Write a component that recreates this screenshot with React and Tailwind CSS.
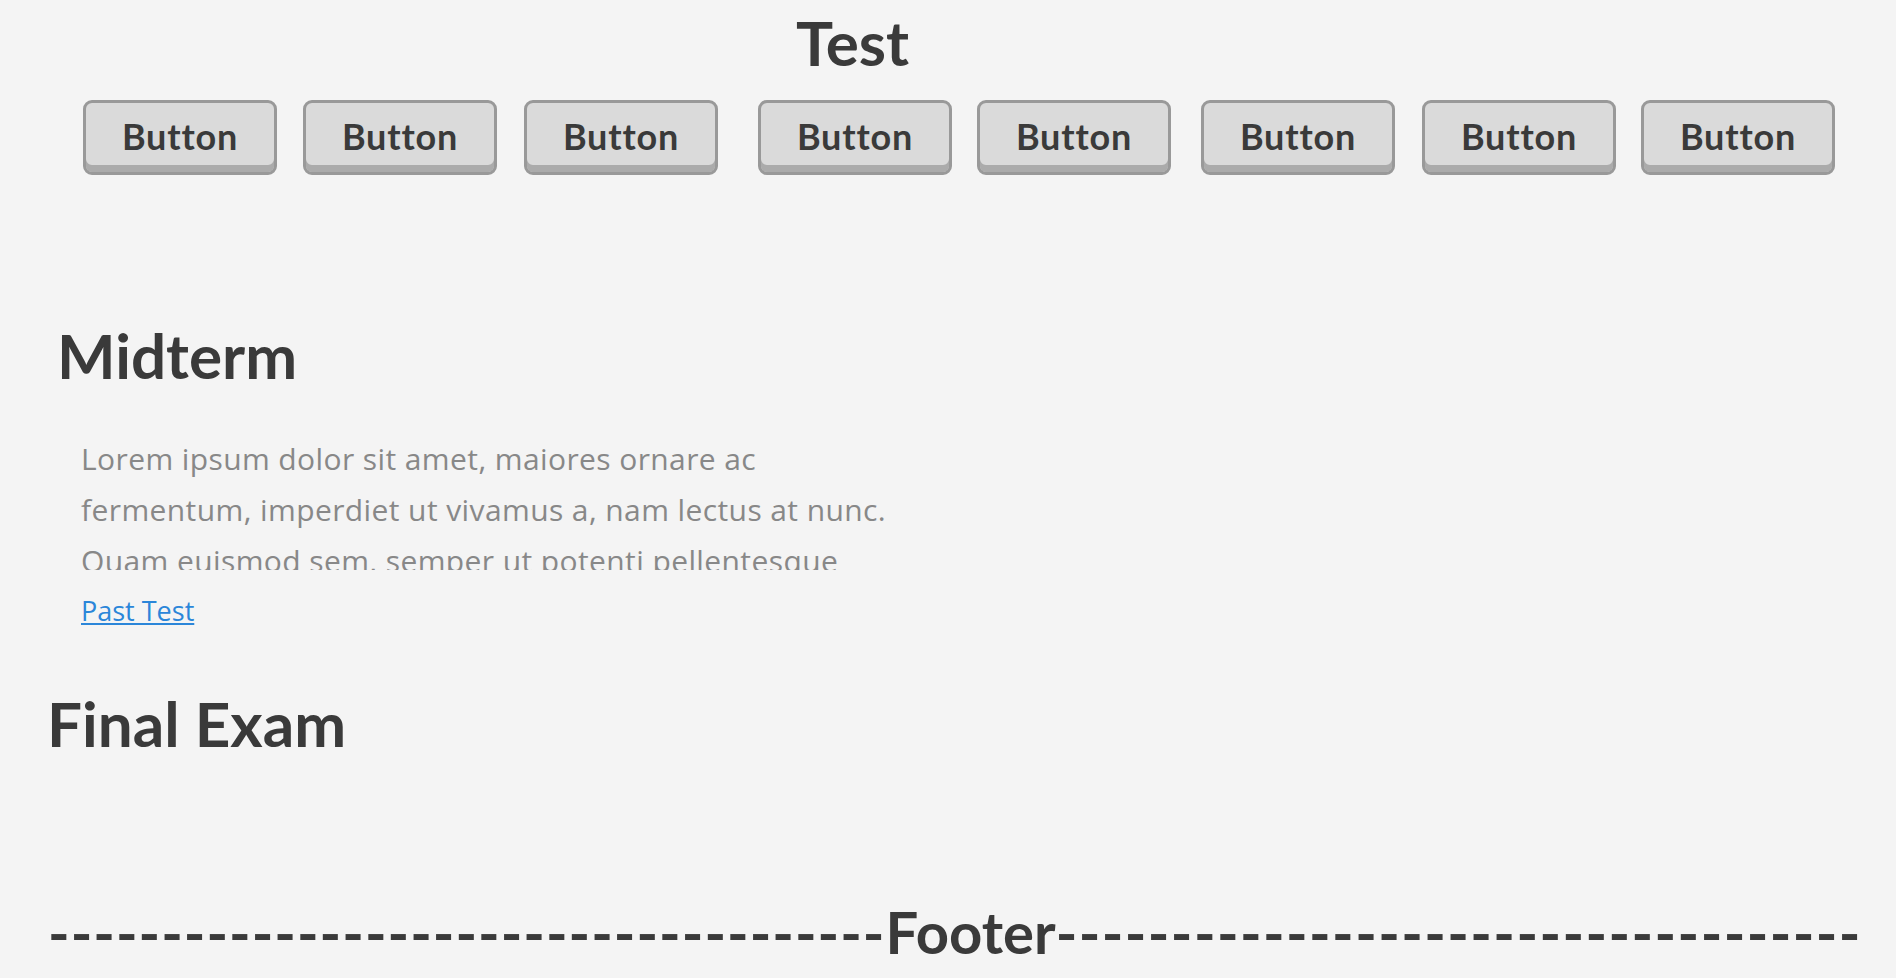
import React from 'react'

const BUTTON_GAPS = ['ml-0', 'ml-[26px]', 'ml-[27px]', 'ml-[40px]', 'ml-[25px]', 'ml-[30px]', 'ml-[27px]', 'ml-[25px]']

function GrayButton({ className }) {
  return (
    <button
      className={`${className} h-[75px] w-[194px] rounded-[9px] border-[3px] border-[#999999] bg-[#dadada] text-[36px] font-bold leading-none tracking-[0.8px] text-[#3a3a3a] shadow-[inset_0_-7px_0_#ababab]`}
    >
      <span className="relative -top-[2px]">Button</span>
    </button>
  )
}

export default function App() {
  const leftDashes = '-'.repeat(37)
  const rightDashes = '-'.repeat(35)

  return (
    <div className="min-h-screen bg-[#f4f4f4] font-['Lato','Open_Sans',sans-serif] text-[#3a3a3a]">
      <h1 className="pl-[796px] pt-[6px] text-[62px] font-bold leading-[72px]">Test</h1>

      <div className="mt-[22px] flex pl-[83px]">
        {BUTTON_GAPS.map((gap, i) => (
          <GrayButton key={i} className={gap} />
        ))}
      </div>

      <h2 className="mt-[143px] pl-[57px] text-[62px] font-bold leading-[74px]">Midterm</h2>

      <p className="ml-[81px] mt-[41px] h-[137px] w-[818px] overflow-hidden font-['Open_Sans',sans-serif] text-[30px] leading-[51px] tracking-[0.4px] text-[#888888]">
        Lorem ipsum dolor sit amet, maiores ornare ac fermentum, imperdiet ut vivamus a, nam lectus at nunc. Quam
        euismod sem, semper ut potenti pellentesque quisque. In eget sapien sed, sit duis vestibulum ultricies,
        placerat morbi amet vel, nullam in in lorem vel.
      </p>

      <div className="mt-[24px] pl-[81px] font-['Open_Sans',sans-serif] text-[27px] leading-[34px]">
        <a href="#" className="text-[#2b86d9] underline">
          Past Test
        </a>
      </div>

      <h2 className="mt-[58px] pl-[47px] text-[62px] font-bold leading-[74px]">Final Exam</h2>

      <div className="mt-[136px] whitespace-nowrap pl-[48px] text-[58px] font-bold leading-[72px]">
        <span className="tracking-[1px]">{leftDashes}</span>
        <span>Footer</span>
        <span className="tracking-[1.4px]">{rightDashes}</span>
      </div>
    </div>
  )
}
